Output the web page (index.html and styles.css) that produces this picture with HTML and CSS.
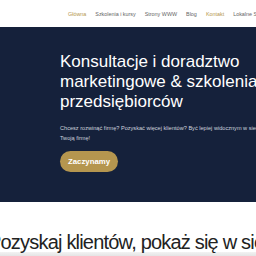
FILE: index.html
```html
<!DOCTYPE html>
<html lang="pl">
<head>
    <meta charset="UTF-8">
    <meta name="viewport" content="width=device-width, initial-scale=1.0">
    <title>Konsultacje i doradztwo marketingowe</title>
    <link rel="stylesheet" href="styles.css">
</head>
<body>

<header class="top">
    <nav class="menu">
        <a href="#" class="active">Główna</a>
        <a href="#">Szkolenia i kursy</a>
        <a href="#">Strony WWW</a>
        <a href="#">Blog</a>
        <a href="#" class="active">Kontakt</a>
        <a href="#">Lokalne SEO</a>
    </nav>
</header>

<section class="hero">
    <h1>Konsultacje i doradztwo<br>marketingowe &amp; szkolenia dla<br>przedsiębiorców</h1>
    <p>Chcesz rozwinąć firmę? Pozyskać więcej klientów? Być lepiej widocznym w sieci? Pomożemy rozwinąć<br>Twoją firmę!</p>
    <a href="#" class="btn">Zaczynamy</a>
</section>

<section class="intro">
    <h2>Pozyskaj klientów, pokaż się w sieci</h2>
</section>
<div class="bar"></div>

</body>
</html>
```

FILE: styles.css
```css
html, body {
    margin: 0;
    padding: 0;
    overflow: hidden;
}
body {
    font-family: "Liberation Sans", Arial, sans-serif;
    background-color: white;
    width: 256px;
    height: 256px;
}
.top {
    height: 27px;
    display: flex;
    align-items: center;
    padding-left: 68px;
}
.menu {
    display: flex;
    gap: 9px;
    white-space: nowrap;
}
.menu a {
    font-size: 5.4px;
    color: #666;
    text-decoration: none;
}
.menu a.active {
    color: #b5964f;
}
.hero {
    background-color: #15213b;
    height: 175px;
    padding-left: 60px;
    box-sizing: border-box;
    padding-top: 25px;
    white-space: nowrap;
}
.hero h1 {
    margin: 0;
    color: white;
    font-weight: normal;
    font-size: 17px;
    line-height: 20px;
}
.hero p {
    margin: 11px 0 0;
    color: #cfd4de;
    font-size: 5.6px;
    line-height: 10px;
}
.btn {
    display: inline-block;
    margin-top: 8px;
    background-color: #b5964f;
    color: white;
    font-weight: bold;
    font-size: 7.8px;
    text-decoration: none;
    padding: 0 8px;
    height: 21px;
    line-height: 21px;
    border-radius: 11px;
}
.intro {
    height: 50px;
    white-space: nowrap;
    display: flex;
    align-items: flex-end;
}
.intro h2 {
    margin: 0 0 -2px -12px;
    font-weight: normal;
    font-size: 20px;
    letter-spacing: -0.8px;
    line-height: 24px;
    color: #222;
}
.bar {
    height: 4px;
    background: linear-gradient(#f2f2f2, #e4e4e4);
}
```
